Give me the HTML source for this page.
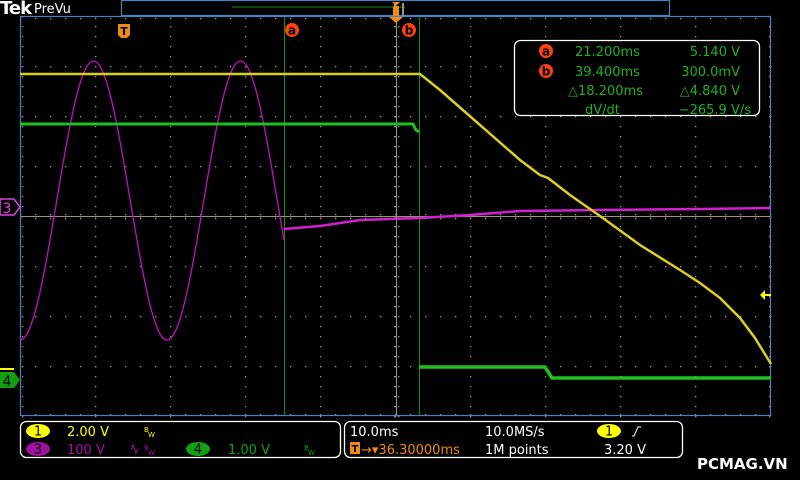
<!DOCTYPE html>
<html><head><meta charset="utf-8"><style>
html,body{margin:0;padding:0;background:#000;width:800px;height:480px;overflow:hidden}
svg{display:block}
text{font-family:"DejaVu Sans","Liberation Sans",sans-serif}
</style></head><body>
<svg id="s" width="800" height="480" viewBox="0 0 800 480" xmlns="http://www.w3.org/2000/svg">
<rect width="800" height="480" fill="#000"/>
<!-- top -->
<text x="0" y="14" fill="#fff" font-family="Liberation Serif" font-weight="bold" font-size="18" letter-spacing="-1">Tek</text>
<text x="34" y="13" fill="#fff" font-size="13">PreVu</text>
<rect x="121.5" y="0.5" width="548" height="15" fill="none" stroke="#4a7fc0" stroke-width="1.2"/>
<line x1="232" y1="7" x2="405" y2="7" stroke="#109010" stroke-width="1"/>
<path d="M394 3h2v13h-2zM402 3h2v13h-2z" fill="#9a9080"/>
<rect x="393" y="6" width="6" height="10" rx="1" fill="#f08c10"/>
<path d="M396 2l-4 0l4 4l4-4z" fill="#f08c10"/>
<!-- graticule -->
<g id="grid"></g>
<rect x="20.5" y="16.5" width="750" height="399" fill="none" stroke="#4a7fc0" stroke-width="1.2"/>
<!-- cursors -->
<line x1="284.5" y1="17" x2="284.5" y2="415" stroke="#109010"/>
<line x1="419.5" y1="17" x2="419.5" y2="415" stroke="#109010"/>
<line x1="396.5" y1="22" x2="396.5" y2="415" stroke="#9a9080" stroke-width="1"/>
<line x1="21" y1="216.5" x2="770" y2="216.5" stroke="#9a9080"/>
<path d="M389 17h14l-7 6z" fill="#f08c10"/>
<!-- traces -->
<path id="mag" fill="none" stroke="#c010c0" stroke-width="1.3"/>
<polyline points="284,229 320,226 360,220 420,218 470,215 520,211 600,210 700,209 771,208" fill="none" stroke="#d020d0" stroke-width="2.5"/>
<polyline points="20,74 420,74 440,90 480,125 520,160 540,175 548,178 570,195 600,216 640,245 680,270 700,283 720,298 740,318 755,338 771,364" fill="none" stroke="#d8d020" stroke-width="2.5"/>
<polyline points="20,124 413,124 416,130 419,132" fill="none" stroke="#20c020" stroke-width="3"/>
<polyline points="419,367 545,367 552,378 771,378" fill="none" stroke="#20c020" stroke-width="3.5"/>
<!-- markers -->
<path d="M118 24h12v11l-3 3h-6l-3-3z" fill="#f08c10"/>
<text x="124" y="35" fill="#000" font-size="11" font-weight="bold" text-anchor="middle">T</text>
<circle cx="292" cy="30" r="7" fill="#ff4010"/><text x="292" y="34.5" fill="#000" font-size="12" font-weight="bold" text-anchor="middle">a</text>
<circle cx="409" cy="30" r="7" fill="#ff4010"/><text x="409" y="34.5" fill="#000" font-size="12" font-weight="bold" text-anchor="middle">b</text>
<path d="M0 199h14l6 8l-6 8h-14z" fill="#000" stroke="#e040e0" stroke-width="1.5"/>
<text x="7" y="213" fill="#e040e0" font-size="14" text-anchor="middle">3</text>
<path d="M0 368h14v2h-14z" fill="#ffff00"/>
<path d="M0 372h14l6 8l-6 8h-14z" fill="#10a010"/>
<text x="7" y="386" fill="#000" font-size="14" text-anchor="middle">4</text>
<path d="M760 295l5-5v10z M764 294h7v2h-7z" fill="#ffff00"/>
<!-- cursor readout -->
<rect x="514.5" y="40.5" width="245" height="75" rx="6" fill="#000" stroke="#fff" stroke-width="1.3"/>
<circle cx="546" cy="51" r="7" fill="#ff4010"/><text x="546" y="55.5" fill="#000" font-size="12" font-weight="bold" text-anchor="middle">a</text>
<circle cx="546" cy="71" r="7" fill="#ff4010"/><text x="546" y="75.5" fill="#000" font-size="12" font-weight="bold" text-anchor="middle">b</text>
<g fill="#20b020" font-size="13">
<text x="575" y="56">21.200ms</text><text x="740" y="56" text-anchor="end">5.140 V</text>
<text x="575" y="76">39.400ms</text><text x="740" y="76" text-anchor="end">300.0mV</text>
<text x="568" y="95">△18.200ms</text><text x="740" y="95" text-anchor="end">△4.840 V</text>
<text x="585" y="114">dV/dt</text><text x="751" y="114" text-anchor="end">−265.9 V/s</text>
</g>
<!-- bottom -->
<rect x="20.5" y="421.5" width="320" height="36" rx="6" fill="none" stroke="#fff" stroke-width="1.3"/>
<rect x="344.5" y="421.5" width="338" height="36" rx="6" fill="none" stroke="#fff" stroke-width="1.3"/>
<ellipse cx="38" cy="431" rx="12" ry="7" fill="#ffff00"/><text x="38" y="435.5" fill="#000" font-size="13" text-anchor="middle">1</text>
<text x="67" y="436" fill="#ffff00" font-size="13">2.00 V</text>
<text x="144" y="432" fill="#ffff00" font-size="7">B</text><text x="148" y="437" fill="#ffff00" font-size="7">W</text>
<ellipse cx="38" cy="449" rx="12" ry="7" fill="#a010a0"/><text x="38" y="453.5" fill="#000" font-size="13" text-anchor="middle">3</text>
<text x="67" y="454" fill="#a010a0" font-size="13">100 V</text>
<path d="M131 450l2-5l3 8l2-4" fill="none" stroke="#a010a0" stroke-width="1"/>
<text x="144" y="450" fill="#a010a0" font-size="7">B</text><text x="148" y="455" fill="#a010a0" font-size="7">W</text>
<ellipse cx="198" cy="449" rx="12" ry="7" fill="#10a010"/><text x="198" y="453.5" fill="#000" font-size="13" text-anchor="middle">4</text>
<text x="228" y="454" fill="#10a010" font-size="13">1.00 V</text>
<text x="304" y="450" fill="#10a010" font-size="7">B</text><text x="308" y="455" fill="#10a010" font-size="7">W</text>
<text x="350" y="436" fill="#fff" font-size="13">10.0ms</text>
<rect x="350" y="442" width="10" height="12" fill="#f08c10"/><text x="355" y="452" fill="#000" font-size="10" font-weight="bold" text-anchor="middle">T</text>
<text x="361" y="454" fill="#f08c10" font-size="13">→▾36.30000ms</text>
<text x="485" y="436" fill="#fff" font-size="13">10.0MS/s</text>
<text x="485" y="454" fill="#fff" font-size="13">1M points</text>
<ellipse cx="609" cy="431" rx="12" ry="7" fill="#ffff00"/><text x="609" y="435.5" fill="#000" font-size="13" text-anchor="middle">1</text>
<path d="M632 436h2l4-9h3" fill="none" stroke="#fff" stroke-width="1"/>
<text x="604" y="454" fill="#fff" font-size="13">3.20 V</text>
<text x="697" y="469" fill="#fff" font-size="15" font-weight="bold" font-family="Liberation Sans">PCMAG.VN</text>
</svg>
<script>
var g=document.getElementById("grid"),h="";
function dot(x,y){h+='<rect x="'+x+'" y="'+y+'" width="1.3" height="1.3" fill="#a09888"/>';}
for(var i=1;i<10;i++){var x=20+i*75;for(var y=16;y<=416;y+=10)dot(x,y);}
for(var j=1;j<8;j++){var y=16+j*50;for(var x=20;x<=771;x+=15)dot(x,y);}
for(var x=20;x<=771;x+=15){dot(x,18);dot(x,414);dot(x,214);dot(x,218);}
for(var y=16;y<=416;y+=10){dot(22,y);dot(769,y);dot(394,y);dot(398,y);}
g.innerHTML=h;
var d="";for(var x=20;x<=284;x+=1){var y=200.5+139.5*Math.cos(2*Math.PI*(x-20)/147);d+=(x==20?"M":"L")+x+" "+y.toFixed(1);}
document.getElementById("mag").setAttribute("d",d);
</script>
</body></html>
